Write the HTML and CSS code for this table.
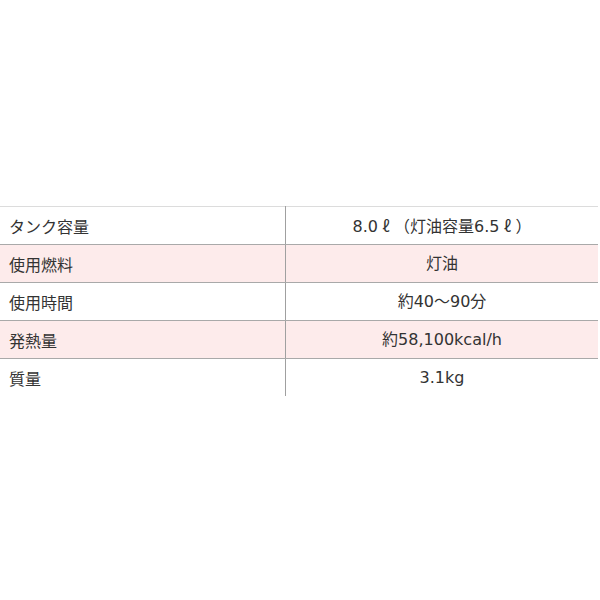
FILE: index.html
```html
<!DOCTYPE html>
<html lang="ja">
<head>
<meta charset="utf-8">
<link rel="stylesheet" href="styles.css">
</head>
<body>
<table class="spec">
  <tbody>
    <tr><th>タンク容量</th><td>8.0<span class="unit">ℓ</span>（灯油容量6.5<span class="unit">ℓ</span>）</td></tr>
    <tr class="alt"><th>使用燃料</th><td>灯油</td></tr>
    <tr><th>使用時間</th><td>約40～90分</td></tr>
    <tr class="alt"><th>発熱量</th><td>約58,100kcal/h</td></tr>
    <tr class="last"><th>質量</th><td>3.1kg</td></tr>
  </tbody>
</table>
</body>
</html>
```
FILE: styles.css
```css
html, body {
  margin: 0;
  padding: 0;
  background: #fff;
}
body {
  padding-top: 206px;
  font-family: "DejaVu Sans", "Noto Sans CJK JP", sans-serif;
  color: #333;
}
.spec {
  width: 598px;
  border-collapse: collapse;
  border-top: 1px solid #dcdcdc;
  font-size: 16px;
}
.spec th,
.spec td {
  height: 37px;
  padding: 0;
  font-weight: normal;
  border-bottom: 1px solid #a9a9a9;
  line-height: 20px;
}
.spec th {
  width: 276px;
  text-align: left;
  padding-left: 9px;
  border-right: 1px solid #a0a0a0;
  font-family: "Noto Sans CJK JP", sans-serif;
}
.spec td {
  text-align: center;
}
.spec .unit {
  display: inline-block;
  width: 1em;
  text-align: center;
  font-family: "Noto Sans CJK JP", sans-serif;
}
.spec .alt th,
.spec .alt td {
  background: #fdebeb;
}
.spec .last th,
.spec .last td {
  border-bottom: none;
}
```
